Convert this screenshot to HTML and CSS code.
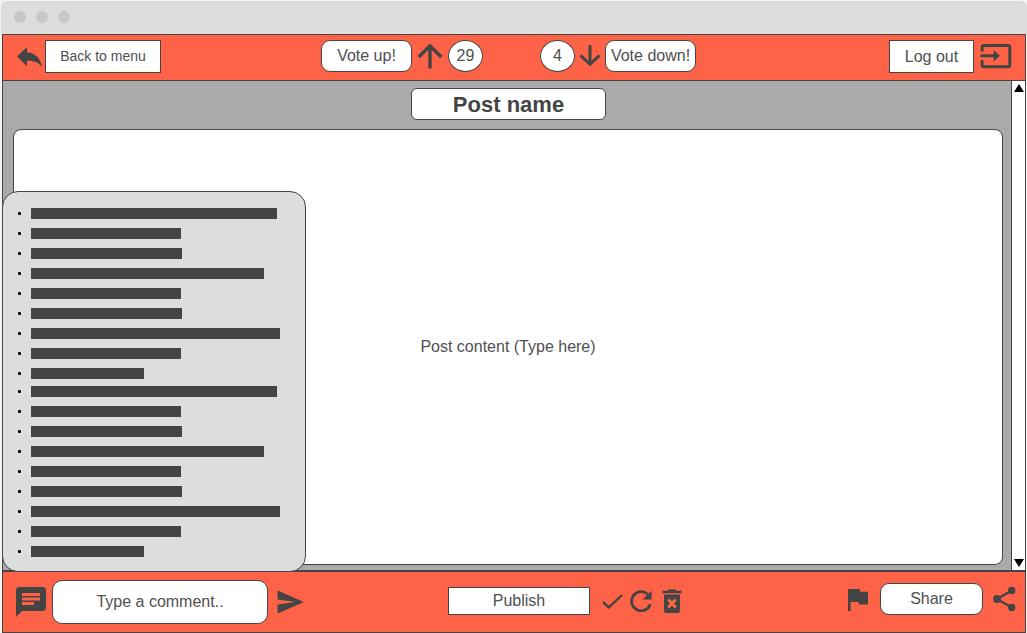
FILE: index.html
```html
<!DOCTYPE html>
<html lang="en">
<head>
<meta charset="utf-8">
<title>Post editor</title>
<link rel="stylesheet" href="styles.css">
</head>
<body>
<div class="window">
  <div class="titlebar"><span class="dot"></span><span class="dot"></span><span class="dot"></span></div>
  <div class="app">
    <header class="topbar">
      <div class="group back">
        <svg class="icon-back" width="25" height="20" viewBox="0 0 25 20"><path d="M0 9.600 10 0V5.300C18 5.800 23.800 11.500 25 20 20.500 14.600 16 13.600 10 13.800V19.200Z"/></svg>
        <button class="btn back-btn">Back to menu</button>
      </div>
      <div class="group vote-up">
        <button class="btn round vote-btn">Vote up!</button>
        <svg class="icon-up" width="26" height="26" viewBox="0 0 26 26"><path class="line" d="M13 25.500V3M1.700 14 13 2.900 24.300 14"/></svg>
        <span class="count">29</span>
      </div>
      <div class="group vote-down">
        <span class="count">4</span>
        <svg class="icon-down" width="22" height="22" viewBox="0 0 22 22"><path class="line thin" d="M11 0V19M1.500 10.300 11 19.300 20.500 10.300"/></svg>
        <button class="btn round vote-btn">Vote down!</button>
      </div>
      <div class="group logout">
        <button class="btn logout-btn">Log out</button>
        <svg class="icon-exit" width="32" height="26" viewBox="0 0 32 26"><path class="line exit" d="M2.100 8.600V3.900Q2.100 2.400 3.900 2.400H28Q29.800 2.400 29.800 3.900V22Q29.800 23.800 28 23.800H3.900Q2.100 23.800 2.100 22V17M.5 12.800H15"/><path d="M13.700 7 19.900 12.800 13.700 18.600Z"/></svg>
      </div>
    </header>
    <main class="workspace">
      <div class="editor">
        <h1 class="post-name">Post name</h1>
        <div class="post-content">Post content (Type here)</div>
      </div>
      <div class="scrollbar">
        <svg width="10" height="8" viewBox="0 0 10 8"><path class="black" d="M5 0 10 8H0Z"/></svg>
        <svg width="10" height="8" viewBox="0 0 10 8"><path class="black" d="M0 0H10L5 8Z"/></svg>
      </div>
      <aside class="comments">
        <ul class="lines">
          <li><span class="bar" style="width:246px"></span></li>
          <li><span class="bar" style="width:150px"></span></li>
          <li><span class="bar" style="width:151px"></span></li>
          <li><span class="bar" style="width:233px"></span></li>
          <li><span class="bar" style="width:150px"></span></li>
          <li><span class="bar" style="width:151px"></span></li>
          <li><span class="bar" style="width:249px"></span></li>
          <li><span class="bar" style="width:150px"></span></li>
          <li><span class="bar" style="width:113px"></span></li>
        </ul>
        <ul class="lines">
          <li><span class="bar" style="width:246px"></span></li>
          <li><span class="bar" style="width:150px"></span></li>
          <li><span class="bar" style="width:151px"></span></li>
          <li><span class="bar" style="width:233px"></span></li>
          <li><span class="bar" style="width:150px"></span></li>
          <li><span class="bar" style="width:151px"></span></li>
          <li><span class="bar" style="width:249px"></span></li>
          <li><span class="bar" style="width:150px"></span></li>
          <li><span class="bar" style="width:113px"></span></li>
        </ul>
      </aside>
    </main>
    <footer class="bottombar">
      <div class="group compose">
        <svg class="icon-comment" width="30" height="30" viewBox="2 2 20 20"><path fill-rule="evenodd" d="M20 2H4C2.900 2 2 2.900 2 4V22L6 18H20C21.100 18 22 17.100 22 16V4C22 2.900 21.100 2 20 2ZM6 6H18V8H6ZM6 9H18V11H6ZM6 12H14V14H6Z"/></svg>
        <div class="comment-input">Type a comment..</div>
        <svg class="icon-send" width="27" height="24" viewBox="0 0 27 24"><path d="M.5 .500 27 12 .5 23.500V14.500L18.500 12 .5 9.500Z"/></svg>
      </div>
      <div class="group publish">
        <button class="btn publish-btn">Publish</button>
        <svg class="icon-check" width="21" height="15" viewBox="0 0 21 15"><path class="line check" d="M1 8 6.800 13.400 20 1"/></svg>
        <svg class="icon-refresh" width="22" height="22" viewBox="0 0 22 22"><path class="line refresh" d="M20.300 14.300A9.600 9.600 0 1 1 17.800 4.200"/><path d="M21.600 .8V9.500H12.500Z"/></svg>
        <svg class="icon-trash" width="20" height="25" viewBox="0 0 20 25"><path d="M.5 1.700H5.500L7 .2H13L14.500 1.700H19.500V4.300H.5ZM2 5.500H18V21.500Q18 24 15.500 24H4.500Q2 24 2 21.500Z"/><path class="cross" d="M6.200 10.600 13.800 18.400M13.800 10.600 6.200 18.400"/></svg>
      </div>
      <div class="group share">
        <svg class="icon-flag" width="20" height="22" viewBox="0 0 20 22"><path d="M0 0H11.700L12.200 2.700H20V15.600H11L10.500 13H2.600V22H0Z"/></svg>
        <button class="btn round share-btn">Share</button>
        <svg class="icon-share" width="23" height="26" viewBox="0 0 23 26"><path class="line link" d="M18.800 4.500 4 13 18.800 21.500"/><circle cx="18.700" cy="4.500" r="3.700"/><circle cx="4" cy="13" r="3.900"/><circle cx="18.700" cy="21.500" r="3.700"/></svg>
      </div>
    </footer>
  </div>
</div>
</body>
</html>
```
FILE: styles.css
```css
* { box-sizing: border-box; }

body {
  margin: 0;
  background: #f4f4f4;
  color: #505050;
  font: 16px/20px "Liberation Sans", Arial, sans-serif;
}

.window {
  width: 1027px;
  height: 633px;
  padding: 1px 0 0 1px;
  overflow: hidden;
}

.titlebar {
  display: flex;
  gap: 10px;
  height: 33px;
  padding: 10px 0 0 13px;
  background: #ddd;
  border-radius: 6px 6px 0 0;
}

.dot {
  width: 12px;
  height: 12px;
  border-radius: 50%;
  background: #c8c8c8;
}

.app {
  display: flex;
  flex-direction: column;
  width: 1024px;
  height: 599px;
  margin-left: 1px;
  border: 1px solid #444;
}

.topbar, .bottombar {
  display: flex;
  align-items: flex-start;
  flex: none;
  background: #ff6347;
}

.topbar { height: 46px; padding-top: 5px; border-bottom: 1px solid #444; }
.bottombar { height: 61px; border-top: 1px solid #444; }

.group { display: flex; align-items: flex-start; flex: none; }

svg { display: block; flex: none; fill: #444; }

.line { fill: none; stroke: #444; stroke-width: 3.4; }
.thin { stroke-width: 3; }
.exit { stroke-width: 3; }
.check { stroke-width: 2.4; }
.refresh { stroke-width: 2.8; }
.link { stroke-width: 2.3; }
.cross { fill: none; stroke: #ff6347; stroke-width: 2.9; }
.black { fill: #000; }

.btn {
  display: flex;
  align-items: center;
  justify-content: center;
  flex: none;
  margin: 0;
  padding: 0;
  border: 1px solid #444;
  background: #fff;
  color: #505050;
  font: inherit;
  white-space: nowrap;
}

.round { border-radius: 9px; }

.back { width: 318px; padding-left: 14px; }
.icon-back { margin-top: 7px; }
.back-btn { width: 116px; height: 33px; margin-left: 3px; padding-bottom: 1px; font-size: 14px; }

.vote-btn { width: 91px; height: 32px; }
.vote-up { width: 219px; }
.icon-up { margin: 3px 5px 0; }
.icon-down { margin: 5px 4px 0; }

.count {
  display: flex;
  align-items: center;
  justify-content: center;
  width: 35px;
  height: 32px;
  border: 1px solid #444;
  border-radius: 50%;
  background: #fff;
}

.logout { margin-left: auto; padding-right: 13px; }
.logout-btn { width: 85px; height: 33px; }
.icon-exit { margin: 3px 0 0 6px; width: 32px; }

.workspace {
  position: relative;
  display: flex;
  flex: 1;
  min-height: 0;
  background: #aaa;
  border-bottom: 1px solid #444;
}

.editor {
  display: flex;
  flex-direction: column;
  flex: 1;
  padding: 7px 8px 5px 10px;
}

.post-name {
  display: flex;
  align-items: center;
  justify-content: center;
  align-self: center;
  width: 195px;
  height: 32px;
  margin: 0;
  padding: 2px 0 0 1px;
  border: 1px solid #444;
  border-radius: 6px;
  background: #fff;
  color: #444;
  font-size: 22px;
}

.post-content {
  display: flex;
  align-items: center;
  justify-content: center;
  flex: 1;
  margin-top: 9px;
  border: 1px solid #444;
  border-radius: 8px;
  background: #fff;
}

.scrollbar {
  display: flex;
  flex-direction: column;
  justify-content: space-between;
  align-items: flex-end;
  width: 14px;
  padding: 3px 1px;
  border-left: 1px solid #444;
  background: #fff;
}

/* Comment drawer, floating over the editor */
.comments {
  position: absolute;
  left: -1px;
  bottom: -2px;
  width: 304px;
  height: 381px;
  padding: 16px 0 0 15px;
  border: 1px solid #444;
  border-radius: 16px;
  background: #ddd;
}

.lines {
  display: grid;
  gap: 9px;
  margin: 0 0 7px;
  padding: 0;
  list-style: none;
}

.lines li { display: flex; align-items: center; gap: 10px; height: 11px; }
.lines li::before { content: ""; width: 3px; height: 3px; border-radius: 1px; background: #000; }
.bar { height: 11px; background: #444; }

.compose { width: 445px; padding: 8px 0 0 13px; }
.icon-comment { margin-top: 7px; }

.comment-input {
  display: flex;
  align-items: center;
  justify-content: center;
  width: 216px;
  height: 44px;
  margin: 0 9px 0 6px;
  border: 1px solid #444;
  border-radius: 10px;
  background: #fff;
}

.icon-send { margin-top: 10px; }

.publish { padding-top: 15px; }
.publish-btn { width: 142px; height: 28px; }
.icon-check { margin: 7px 0 0 12px; }
.icon-refresh { margin: 3px 0 0 7px; }
.icon-trash { margin: 2px 0 0 10px; }

.share { margin-left: auto; padding: 11px 9px 0 0; }
.icon-flag { margin-top: 6px; }
.share-btn { width: 103px; height: 32px; margin: 0 10px 0 12px; }
.icon-share { margin-top: 3px; }
```
